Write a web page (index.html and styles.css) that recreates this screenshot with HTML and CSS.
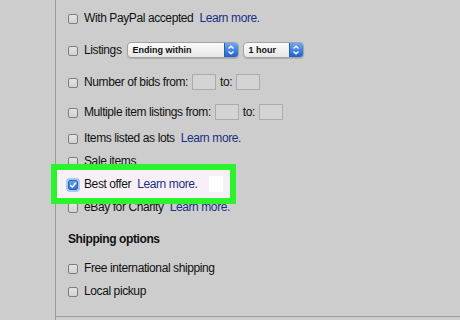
FILE: index.html
```html
<!DOCTYPE html>
<html>

<head>
  <meta charset="UTF-8">
  <title>Opções de busca</title>
  <link rel="stylesheet" href="styles.css">
</head>

<body>
  <div class="page">
    <div class="sidebar"></div>

    <div class="main">
      <div class="row tall">
        <span class="check"></span>
        <span>With PayPal accepted</span>
        <a class="link" href="#">Learn more.</a>
      </div>

      <div class="row tall">
        <span class="check"></span>
        <span>Listings</span>
        <span class="select wide">
          <span class="select-label">Ending within</span>
          <span class="select-arrow">
            <svg width="14" height="16" viewBox="0 0 14 16"><path d="M4.5 6.5 L7 4.2 L9.5 6.5 M4.5 9.5 L7 11.8 L9.5 9.5" fill="none" stroke="#fff" stroke-width="1.4"/></svg>
          </span>
        </span>
        <span class="select narrow">
          <span class="select-label">1 hour</span>
          <span class="select-arrow">
            <svg width="14" height="16" viewBox="0 0 14 16"><path d="M4.5 6.5 L7 4.2 L9.5 6.5 M4.5 9.5 L7 11.8 L9.5 9.5" fill="none" stroke="#fff" stroke-width="1.4"/></svg>
          </span>
        </span>
      </div>

      <div class="row tall">
        <span class="check"></span>
        <span>Number of bids from:</span>
        <span class="box"></span>
        <span>to:</span>
        <span class="box"></span>
      </div>

      <div class="row mid">
        <span class="check"></span>
        <span>Multiple item listings from:</span>
        <span class="box"></span>
        <span>to:</span>
        <span class="box"></span>
      </div>

      <div class="row">
        <span class="check"></span>
        <span>Items listed as lots</span>
        <a class="link" href="#">Learn more.</a>
      </div>

      <div class="row">
        <span class="check"></span>
        <span>Sale items</span>
      </div>

      <!-- Linha destacada em verde -->
      <div class="row highlighted">
        <div class="highlight"><span class="blank"></span></div>
        <span class="check checked">
          <svg width="10" height="10" viewBox="0 0 10 10"><path d="M2.4 5.2 L4.3 7.2 L7.8 2.8" fill="none" stroke="#fff" stroke-width="1.5"/></svg>
        </span>
        <span>Best offer</span>
        <a class="link" href="#">Learn more.</a>
      </div>

      <div class="row charity">
        <span class="check"></span>
        <span>eBay for Charity</span>
        <a class="link" href="#">Learn more.</a>
      </div>

      <div class="section-title">Shipping options</div>

      <div class="row">
        <span class="check"></span>
        <span>Free international shipping</span>
      </div>

      <div class="row">
        <span class="check"></span>
        <span>Local pickup</span>
      </div>
    </div>
  </div>
</body>

</html>
```

FILE: styles.css
```css
body {
  margin: 0;
  background-color: #cdcdcd;
  font-family: 'Liberation Sans', Arial, sans-serif;
  font-size: 12px;
  letter-spacing: -0.4px;
  color: #111;
}

.page {
  display: flex;
  height: 320px;
}

.sidebar {
  width: 55px;
  border-right: 1px solid #9a9a9a;
}

.main {
  flex: 1;
  box-sizing: border-box;
  height: 317px;
  padding: 2px 0 0 12px;
  border-bottom: 1px solid #9a9a9a;
}

.row {
  display: flex;
  align-items: center;
  height: 23px;
}

.row.tall {
  height: 32px;
}

.row.mid {
  height: 28px;
}

/* fica parcialmente coberta pelo destaque */
.row.charity {
  height: 23px;
  margin-bottom: 10px;
}

.check {
  flex: 0 0 auto;
  box-sizing: border-box;
  width: 10px;
  height: 10px;
  margin: 2px 6px 0 0;
  border: 1px solid #7d7d7d;
  border-radius: 2px;
  background: linear-gradient(#e4e4e4, #d2d2d2);
}

.check.checked {
  border-color: #2c62b8;
  background: linear-gradient(#64a2ee, #2f74d8);
  box-shadow: 0 0 0 2px #a9c9f2;
}

.check svg {
  display: block;
  margin: -1px;
}

.link {
  margin-left: 6px;
  color: #1b2d85;
  text-decoration: none;
}

.select {
  display: flex;
  box-sizing: border-box;
  height: 16px;
  margin-left: 5px;
  border: 1px solid #a3a3a3;
  border-radius: 4px;
  background: linear-gradient(#fbfbfb, #e6e6e6);
  box-shadow: 0 1px 1px rgba(0, 0, 0, 0.15);
  overflow: hidden;
}

.select.wide {
  width: 112px;
}

.select.narrow {
  width: 61px;
  margin-left: 4px;
}

.select-label {
  flex: 1;
  padding-left: 5px;
  font-size: 9px;
  font-weight: bold;
  letter-spacing: 0;
  line-height: 14px;
}

.select-arrow {
  width: 13px;
  background: linear-gradient(#6aa8f2, #1f60d0);
  border-left: 1px solid #2a5cb0;
}

.select-arrow svg {
  display: block;
  margin: -1px 0 0 -1px;
}

.box {
  box-sizing: border-box;
  width: 24px;
  height: 16px;
  margin: 0 4px;
  border: 1px solid #ababab;
  background-color: #d4d4d4;
}

.highlighted {
  position: relative;
  z-index: 2;
}

.highlight {
  position: absolute;
  z-index: -1;
  top: -8px;
  left: -17px;
  box-sizing: border-box;
  width: 185px;
  height: 40px;
  border: 6px solid #2cf42c;
  background-color: #f7f1f7;
}

.blank {
  position: absolute;
  top: 6px;
  left: 152px;
  width: 14px;
  height: 16px;
  background-color: #fff;
}

.section-title {
  height: 23px;
  margin: 5px 0;
  font-weight: bold;
  line-height: 23px;
}
```
